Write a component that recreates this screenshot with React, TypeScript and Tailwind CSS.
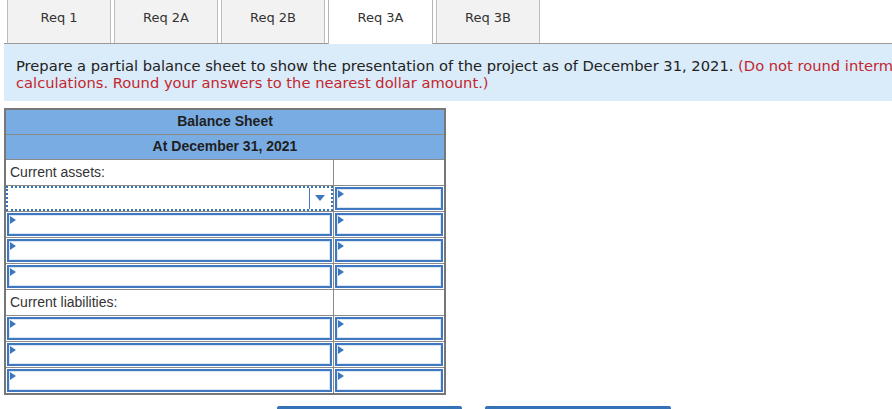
import React from "react";

const tabs = ["Req 1", "Req 2A", "Req 2B", "Req 3A", "Req 3B"];

function Tri() {
  return (
    <svg className="absolute left-[1px] top-[1px]" width="6" height="8" viewBox="0 0 6 8">
      <polygon points="0,0 6,4 0,8" fill="#3b76bf" />
    </svg>
  );
}

function InputCell() {
  return (
    <td className="h-[26px] p-[1px] border border-[#8a8a8a]">
      <div className="relative h-[23px] border-2 border-[#3f78c0] bg-white shadow-[inset_0_0_0_1px_#dbe6f5]">
        <Tri />
      </div>
    </td>
  );
}

function LabelRow({ label }: { label: string }) {
  return (
    <tr>
      <td className="h-[26px] border border-[#8a8a8a] pl-[4px] text-[14px] text-[#333] align-middle">{label}</td>
      <td className="h-[26px] border border-[#8a8a8a]"></td>
    </tr>
  );
}

function InputRow() {
  return (
    <tr>
      <InputCell />
      <InputCell />
    </tr>
  );
}

export default function App() {
  return (
    <div className="w-[892px] h-[409px] overflow-hidden bg-white relative" style={{ fontFamily: "'DejaVu Sans', Verdana, sans-serif" }}>
      {/* Tabs */}
      <div className="ml-[4px] h-[44px] border-b border-[#9a9a9a] flex items-stretch pl-[3px] gap-[3px]">
        {tabs.map((t) => {
          const active = t === "Req 3A";
          return (
            <div
              key={t}
              className={
                active
                  ? "w-[105px] h-[44px] -mb-[1px] border-x border-[#b5b5b5] bg-white flex items-center justify-center pb-[9px] text-[13px] text-[#333]"
                  : "w-[104px] border-x border-[#bdbdbd] bg-[#f2f2f2] flex items-center justify-center pb-[7px] text-[13px] text-[#333]"
              }
            >
              {t}
            </div>
          );
        })}
      </div>

      {/* Instructions */}
      <div className="ml-[4px] w-[1000px] h-[57px] bg-[#daebf9] pl-[12px] pt-[13px] text-[14.7px] leading-[17px] text-[#222]">
        <div className="whitespace-nowrap">
          Prepare a partial balance sheet to show the presentation of the project as of December 31, 2021.{" "}
          <span className="text-[#c4262e]">(Do not round intermediate</span>
        </div>
        <div className="whitespace-nowrap text-[#c4262e]">calculations. Round your answers to the nearest dollar amount.)</div>
      </div>

      {/* Table */}
      <div className="ml-[4px] mt-[7px]" style={{ fontFamily: "'Liberation Sans', Arial, sans-serif" }}>
        <table className="border-collapse border-2 border-[#777] w-[440px] table-fixed">
          <colgroup>
            <col className="w-[328px]" />
            <col className="w-[112px]" />
          </colgroup>
          <tbody>
            <tr>
              <td colSpan={2} className="h-[25px] bg-[#79ace3] border border-[#8a8a8a] text-center font-bold text-[14px] text-[#1f1f1f]">
                Balance Sheet
              </td>
            </tr>
            <tr>
              <td colSpan={2} className="h-[25px] bg-[#79ace3] border border-[#8a8a8a] text-center font-bold text-[14px] text-[#1f1f1f]">
                At December 31, 2021
              </td>
            </tr>
            <LabelRow label="Current assets:" />
            <tr>
              <td className="h-[26px] border border-[#8a8a8a] p-0">
                <div className="relative h-[25px] border-2 border-dotted border-[#3572b8] bg-white flex">
                  <div className="flex-1"></div>
                  <div className="w-[22px] border-l border-[#3f78c0] flex items-center justify-center">
                    <svg width="10" height="6" viewBox="0 0 10 6">
                      <polygon points="0,0 10,0 5,6" fill="#3b76bf" />
                    </svg>
                  </div>
                </div>
              </td>
              <InputCell />
            </tr>
            <InputRow />
            <InputRow />
            <InputRow />
            <LabelRow label="Current liabilities:" />
            <InputRow />
            <InputRow />
            <InputRow />
          </tbody>
        </table>
      </div>

      {/* Buttons (tops) */}
      <div className="flex gap-[23px] pl-[277px] mt-[11px]">
        <div className="w-[185px] h-[10px] bg-[#3572b8] rounded-t-[2px]"></div>
        <div className="w-[186px] h-[10px] bg-[#3572b8] rounded-t-[2px]"></div>
      </div>
    </div>
  );
}
